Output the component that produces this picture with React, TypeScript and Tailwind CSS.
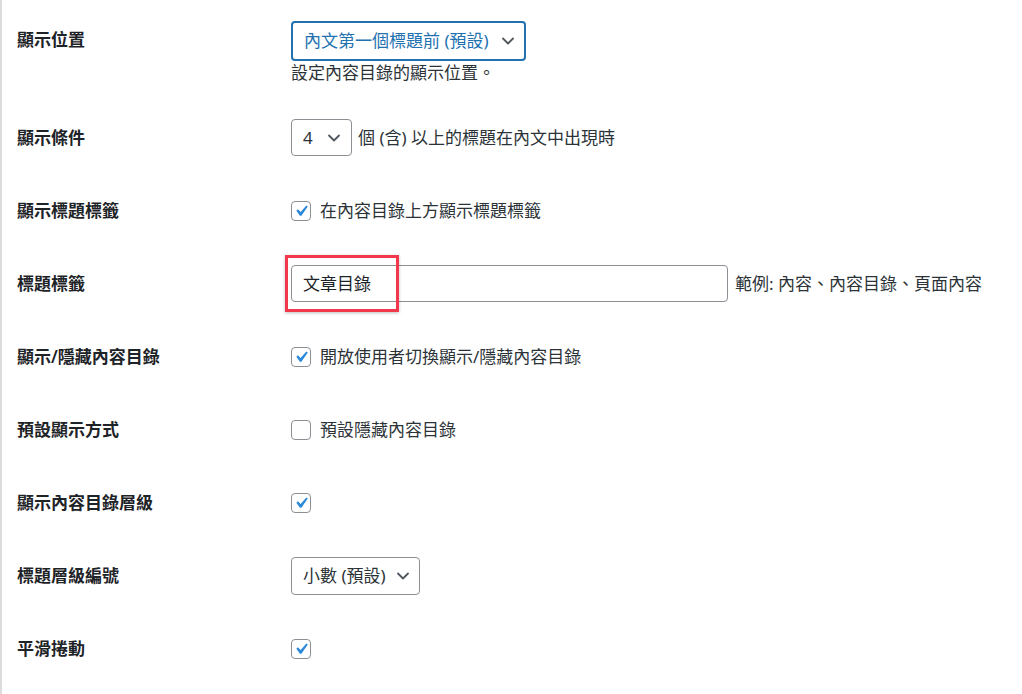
import React from "react";

const font = { fontFamily: '"Noto Sans", "Noto Sans CJK TC", sans-serif' };

function Chevron({ color = "#50575e" }: { color?: string }) {
  return (
    <svg width="12" height="8" viewBox="0 0 12 8" fill="none">
      <polyline points="1,1.5 6,6.5 11,1.5" stroke={color} strokeWidth="1.8" strokeLinecap="round" strokeLinejoin="round" />
    </svg>
  );
}

function Checkbox({ checked }: { checked: boolean }) {
  return (
    <span className="flex h-[20px] w-[20px] shrink-0 items-center justify-center rounded-[4px] border border-[#8c8f94] bg-white">
      {checked && (
        <svg width="22" height="22" viewBox="0 0 20 20" className="shrink-0">
          <path d="M14.83 4.89l1.34.94-5.81 8.38H9.02L5.78 9.67l1.34-1.25 2.57 2.4z" fill="#2b88d8" />
        </svg>
      )}
    </span>
  );
}

function Row({ label, children }: { label: string; children: React.ReactNode }) {
  return (
    <div className="flex h-[73px] items-center">
      <div className="w-[289px] shrink-0 pl-[15px] text-[17px] font-semibold text-[#1d2327]">{label}</div>
      <div className="flex items-center text-[17px] text-[#2c3338]">{children}</div>
    </div>
  );
}

export default function App() {
  return (
    <div className="min-h-[694px] w-[1022px] border-l-2 border-[#dcdcde] bg-white" style={font}>
      <div className="flex h-[101px] items-start">
        <div className="w-[289px] shrink-0 pl-[15px] pt-[27px] text-[17px] font-semibold leading-[26px] text-[#1d2327]">顯示位置</div>
        <div className="flex flex-col pt-[21px]">
          <div className="flex h-[40px] w-[235px] items-center justify-between rounded-[4px] border-2 border-[#2271b1] pl-[11px] pr-[10px] text-[17px] text-[#2271b1]">
            <span>內文第一個標題前 (預設)</span>
            <Chevron color="#50575e" />
          </div>
          <div className="text-[17px] leading-[24px] text-[#2c3338]">設定內容目錄的顯示位置。</div>
        </div>
      </div>

      <Row label="顯示條件">
        <div className="flex h-[37px] w-[61px] items-center justify-between rounded-[4px] border border-[#8c8f94] pl-[11px] pr-[11px] text-[#2c3338]">
          <span>4</span>
          <Chevron />
        </div>
        <span className="ml-[6px]">個 (含) 以上的標題在內文中出現時</span>
      </Row>

      <Row label="顯示標題標籤">
        <Checkbox checked />
        <span className="ml-[9px]">在內容目錄上方顯示標題標籤</span>
      </Row>

      <Row label="標題標籤">
        <div className="relative">
          <div className="flex h-[37px] w-[437px] items-center rounded-[4px] border border-[#8c8f94] px-[11px] text-[#1d2327]">文章目錄</div>
          <div className="absolute left-[-6px] top-[-10px] h-[57px] w-[114px] border-[3px] border-[#f2394b] shadow-[0_1px_3px_rgba(0,0,0,0.25)]" />
        </div>
        <span className="ml-[7px]">範例: 內容、內容目錄、頁面內容</span>
      </Row>

      <Row label="顯示/隱藏內容目錄">
        <Checkbox checked />
        <span className="ml-[9px]">開放使用者切換顯示/隱藏內容目錄</span>
      </Row>

      <Row label="預設顯示方式">
        <Checkbox checked={false} />
        <span className="ml-[9px]">預設隱藏內容目錄</span>
      </Row>

      <Row label="顯示內容目錄層級">
        <Checkbox checked />
      </Row>

      <Row label="標題層級編號">
        <div className="flex h-[38px] w-[129px] items-center justify-between rounded-[4px] border border-[#8c8f94] pl-[11px] pr-[10px] text-[#2c3338]">
          <span>小數 (預設)</span>
          <Chevron />
        </div>
      </Row>

      <Row label="平滑捲動">
        <Checkbox checked />
      </Row>
    </div>
  );
}
